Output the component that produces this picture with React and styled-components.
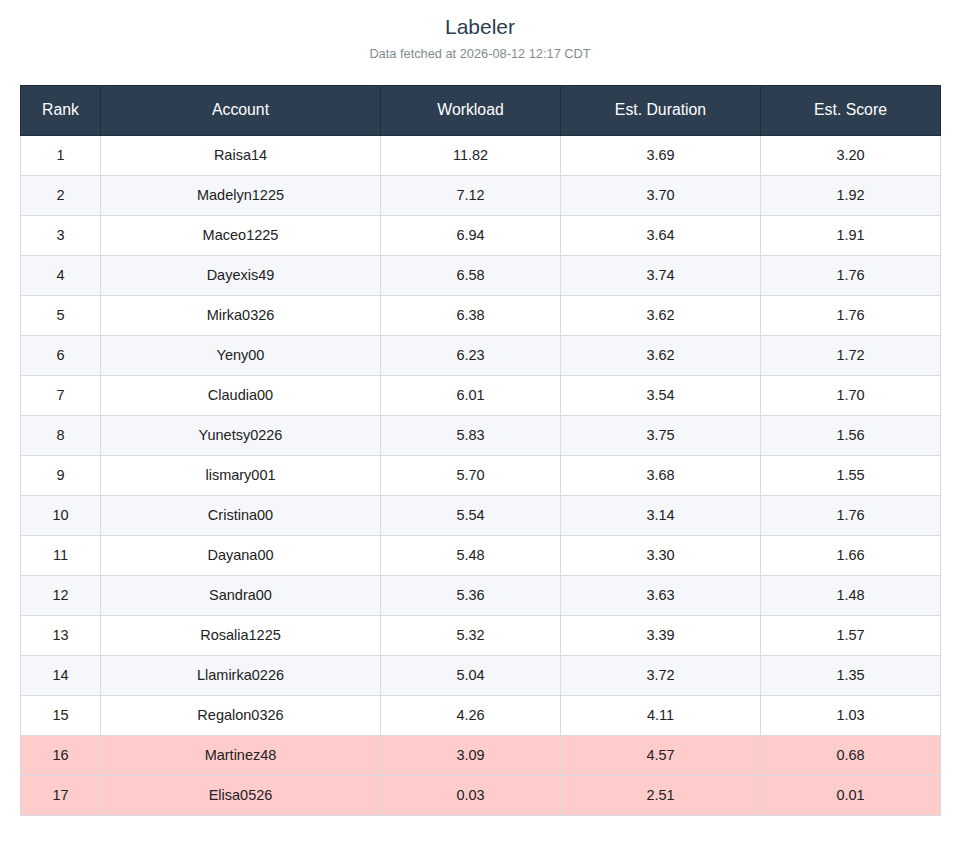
import React from "react";
import styled, { createGlobalStyle } from "styled-components";

const Global = createGlobalStyle`
  body { margin: 0; background: #fff; font-family: "Liberation Sans", Arial, sans-serif; }
`;

const Page = styled.div`
  padding: 13px 20px 20px;
`;

const Title = styled.h1`
  margin: 0;
  text-align: center;
  font-size: 21px;
  font-weight: 400;
  color: #2c3e50;
  line-height: 28px;
`;

const Sub = styled.div`
  text-align: center;
  font-size: 12.8px;
  color: #7f8c8d;
  margin-top: 5px;
  line-height: 16px;
`;

const Table = styled.table`
  margin-top: 23px;
  width: 100%;
  border-collapse: collapse;
  table-layout: fixed;
  font-size: 14.5px;
`;

const Th = styled.th`
  background: #2c3e50;
  color: #fff;
  font-weight: 400;
  font-size: 15.8px;
  height: 47px;
  padding: 0 0 2px;
  border: 1px solid #1f2d3a;
  text-align: center;
`;

const Tr = styled.tr`
  background: ${(p) => (p.$low ? "#ffcccc" : p.$alt ? "#f5f7fa" : "#fff")};
`;

const Td = styled.td`
  height: 37px;
  border: 1px solid #d5dce6;
  text-align: center;
  color: #222;
  padding: 0 0 2px;
`;

const rows = [
  ["Raisa14", "11.82", "3.69", "3.20"],
  ["Madelyn1225", "7.12", "3.70", "1.92"],
  ["Maceo1225", "6.94", "3.64", "1.91"],
  ["Dayexis49", "6.58", "3.74", "1.76"],
  ["Mirka0326", "6.38", "3.62", "1.76"],
  ["Yeny00", "6.23", "3.62", "1.72"],
  ["Claudia00", "6.01", "3.54", "1.70"],
  ["Yunetsy0226", "5.83", "3.75", "1.56"],
  ["lismary001", "5.70", "3.68", "1.55"],
  ["Cristina00", "5.54", "3.14", "1.76"],
  ["Dayana00", "5.48", "3.30", "1.66"],
  ["Sandra00", "5.36", "3.63", "1.48"],
  ["Rosalia1225", "5.32", "3.39", "1.57"],
  ["Llamirka0226", "5.04", "3.72", "1.35"],
  ["Regalon0326", "4.26", "4.11", "1.03"],
  ["Martinez48", "3.09", "4.57", "0.68"],
  ["Elisa0526", "0.03", "2.51", "0.01"],
];

export default function App() {
  return (
    <Page>
      <Global />
      <Title>Labeler</Title>
      <Sub>Data fetched at 2026-08-12 12:17 CDT</Sub>
      <Table>
        <colgroup>
          <col style={{ width: 80 }} />
          <col style={{ width: 280 }} />
          <col style={{ width: 180 }} />
          <col style={{ width: 200 }} />
          <col style={{ width: 180 }} />
        </colgroup>
        <thead>
          <tr>
            <Th>Rank</Th>
            <Th>Account</Th>
            <Th>Workload</Th>
            <Th>Est. Duration</Th>
            <Th>Est. Score</Th>
          </tr>
        </thead>
        <tbody>
          {rows.map((r, i) => (
            <Tr key={r[0]} $alt={i % 2 === 1} $low={i >= 15}>
              <Td>{i + 1}</Td>
              {r.map((c, j) => (
                <Td key={j}>{c}</Td>
              ))}
            </Tr>
          ))}
        </tbody>
      </Table>
    </Page>
  );
}
